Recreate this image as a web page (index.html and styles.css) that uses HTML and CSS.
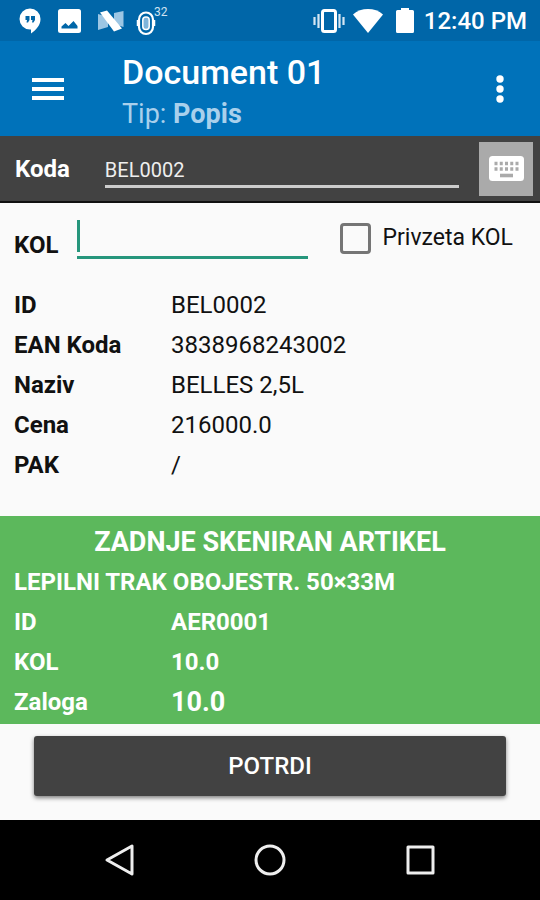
FILE: index.html
```
<!DOCTYPE html>
<html lang="sl">
<head>
  <meta charset="UTF-8">
  <meta name="viewport" content="width=device-width, initial-scale=1.0">
  <title>Document 01</title>
  <link rel="stylesheet" href="styles.css">
</head>
<body>

  <div class="status-bar">
    <div class="status-icons">
      <!-- Hangouts -->
      <svg width="22" height="26" viewBox="0 0 22 26" fill="#fff">
        <path d="M11 .5a10.500 10.500 0 0 1 10.500 10.500c0 6-4 10.500-9.500 14.500v-4h-1A10.500 10.500 0 0 1 11 .5z"/>
        <path fill="#0066a8" d="M6.500 8h4v4L9 14.500H7.500L8 12H6.500zM12 8h4v4l-1.500 2.500H13l.5-2.500H12z"/>
      </svg>
      <!-- Picture -->
      <svg width="23" height="24" viewBox="0 0 23 24">
        <rect width="23" height="24" rx="2.500" fill="#fff"/>
        <path fill="#0066a8" d="M3.500 19.500v-2L7.500 14l3 3 5-5 4 5v2.500z"/>
      </svg>
      <!-- Android N -->
      <svg width="26" height="22" viewBox="0 0 26 22">
        <path fill="#9cc6e4" d="M0 4l10 3v10L0 20zM16 3l9.500-2v16L16 14z"/>
        <path fill="#fff" d="M2 2.500L9 .5 24 18.500 16 21.500z"/>
      </svg>
      <!-- Scanner -->
      <svg class="scanner-icon" width="20" height="26" viewBox="0 0 20 26" fill="none" stroke="#fff">
        <rect x="6.800" y="7" width="6.400" height="12.500" rx="3" stroke-width="1.500" fill="#7fb4da"/>
        <rect x="3" y="2.500" width="14" height="21.500" rx="7" stroke-width="2.200"/>
        <path stroke-width="2.500" d="M2 10v6M18 10v6"/>
      </svg>
      <span class="scan-count">32</span>
    </div>
    <div class="status-right">
      <svg class="vibrate-icon" width="32" height="24" viewBox="0 0 32 24" fill="none" stroke="#fff">
        <rect x="9.500" y="1.500" width="13" height="21" rx="2" stroke-width="3"/>
        <path stroke-width="2.200" stroke="#d5e6f3" d="M1.500 8v8M5.500 5v14M26.500 5v14M30.500 8v8"/>
      </svg>
      <svg class="wifi-icon" width="30" height="24" viewBox="0 0 30 24" fill="#fff">
        <path d="M0 5.500C8-1.800 22-1.800 30 5.500L15 24z"/>
      </svg>
      <svg class="battery-icon" width="18" height="25" viewBox="0 0 18 25" fill="#fff">
        <path d="M5 2V0h8v2h3.500A1.500 1.500 0 0 1 18 3.500v20a1.500 1.500 0 0 1-1.500 1.500h-15A1.500 1.500 0 0 1 0 23.500v-20A1.500 1.500 0 0 1 1.500 2z"/>
      </svg>
      <span class="clock">12:40 PM</span>
    </div>
  </div>

  <header class="app-bar">
    <button class="icon-button" type="button" aria-label="Meni">
      <svg width="32" height="22" viewBox="0 0 32 22" stroke="#fff" stroke-width="4">
        <path d="M0 2h32M0 11h32M0 20h32"/>
      </svg>
    </button>
    <div class="titles">
      <h1>Document 01</h1>
      <p class="subtitle">Tip: <b>Popis</b></p>
    </div>
    <button class="icon-button" type="button" aria-label="Več">
      <svg width="8" height="28" viewBox="0 0 8 28" fill="#fff">
        <circle cx="4" cy="4" r="3.700"/>
        <circle cx="4" cy="14" r="3.700"/>
        <circle cx="4" cy="24" r="3.700"/>
      </svg>
    </button>
  </header>

  <div class="code-bar">
    <label for="koda">Koda</label>
    <input id="koda" class="code-input" type="text" value="BEL0002">
    <button class="keyboard-button" type="button" aria-label="Tipkovnica">
      <svg width="35" height="25" viewBox="0 0 35 25">
        <rect width="35" height="25" rx="3.500" fill="#fff"/>
        <path stroke="#aaa" stroke-width="3.400" stroke-dasharray="3 2.250" d="M5.500 7.500h24.500M5.500 13h24.500"/>
        <path stroke="#aaa" stroke-width="3.600" d="M11 19.500h13"/>
      </svg>
    </button>
  </div>

  <main>
    <div class="quantity-row">
      <label class="quantity-label" for="kol">KOL</label>
      <div class="quantity-field">
        <input id="kol" class="quantity-input" type="text">
      </div>
      <label class="default-check">
        <input type="checkbox">
        <span>Privzeta KOL</span>
      </label>
    </div>

    <dl class="details">
      <dt>ID</dt><dd>BEL0002</dd>
      <dt>EAN Koda</dt><dd>3838968243002</dd>
      <dt>Naziv</dt><dd>BELLES 2,5L</dd>
      <dt>Cena</dt><dd>216000.0</dd>
      <dt>PAK</dt><dd>/</dd>
    </dl>

    <section class="last-scan">
      <h2>ZADNJE SKENIRAN ARTIKEL</h2>
      <p class="article-name">LEPILNI TRAK OBOJESTR. 50×33M</p>
      <dl class="details">
        <dt>ID</dt><dd>AER0001</dd>
        <dt>KOL</dt><dd>10.0</dd>
        <dt>Zaloga</dt><dd class="stock">10.0</dd>
      </dl>
    </section>

    <div class="actions">
      <button class="confirm-button" type="button">POTRDI</button>
    </div>
  </main>

  <nav class="nav-bar">
    <button class="icon-button" type="button" aria-label="Nazaj">
      <svg width="32" height="34" viewBox="0 0 32 34" fill="none" stroke="#eee" stroke-width="3" stroke-linejoin="round">
        <path d="M29 3v28L4 17z"/>
      </svg>
    </button>
    <button class="icon-button" type="button" aria-label="Domov">
      <svg width="34" height="34" viewBox="0 0 34 34" fill="none" stroke="#eee" stroke-width="3">
        <circle cx="17" cy="17" r="14"/>
      </svg>
    </button>
    <button class="icon-button" type="button" aria-label="Nedavno">
      <svg width="32" height="34" viewBox="0 0 32 34" fill="none" stroke="#eee" stroke-width="3" stroke-linejoin="round">
        <rect x="3" y="4" width="25" height="26"/>
      </svg>
    </button>
  </nav>

</body>
</html>
```
FILE: styles.css
```
* {
  box-sizing: border-box;
  margin: 0;
  padding: 0;
}
body {
  font-family: Roboto, "Liberation Sans", sans-serif;
  font-size: 24px;
  line-height: 40px;
  color: #111;
  background-color: #fafafa;
  display: flex;
  flex-direction: column;
  min-height: 100vh;
}
button,
input {
  font: inherit;
  border: none;
  background: none;
}
button {
  cursor: pointer;
}
svg {
  display: block;
  flex-shrink: 0;
}

/* Status bar */
.status-bar {
  display: flex;
  justify-content: space-between;
  height: 41px;
  padding: 0 13px 0 19px;
  background-color: #0066a8;
  color: #fff;
}
.status-icons,
.status-right {
  display: flex;
  align-items: center;
}
.status-icons {
  gap: 17px;
}
.scanner-icon {
  margin: 4px 0 0 -5px;
}
.scan-count {
  align-self: flex-start;
  margin-left: -19px;
  font-size: 12px;
  line-height: 24px;
  color: #cfe3f2;
}
.wifi-icon {
  margin-left: 8px;
}
.battery-icon {
  margin-left: 13px;
}
.clock {
  margin-left: 10px;
  font-weight: 500;
}

/* App bar */
.app-bar {
  display: flex;
  align-items: center;
  height: 95px;
  padding: 0 36px 0 32px;
  background-color: #0072ba;
  color: #fff;
}
.icon-button {
  display: flex;
  align-items: center;
}
.titles {
  flex: 1;
  margin-left: 58px;
  padding-top: 6px;
}
h1 {
  font-size: 34px;
  font-weight: 500;
  line-height: 44px;
}
.subtitle {
  font-size: 27px;
  color: #a9d0ec;
}

/* Code entry */
.code-bar {
  display: flex;
  align-items: center;
  height: 67px;
  padding: 0 7px 0 15px;
  background-color: #424242;
  border-bottom: 2px solid #111;
  color: #fff;
  font-weight: bold;
}
.code-input {
  flex: 1;
  min-width: 0;
  height: 38px;
  margin: 0 20px 0 35px;
  padding-top: 6px;
  border-bottom: 3px solid #ccc;
  color: #eee;
  font-size: 20px;
  font-weight: normal;
}
.keyboard-button {
  display: flex;
  align-items: center;
  justify-content: center;
  width: 54px;
  height: 54px;
  background-color: #aaa;
}

main {
  flex: 1;
}
.quantity-row {
  display: flex;
  align-items: flex-start;
  padding: 15px 27px 20px 14px;
}
.quantity-label {
  margin-top: 7px;
  font-weight: bold;
}
.quantity-field {
  position: relative;
  flex: 1;
  min-width: 0;
  margin: 0 32px 0 19px;
}
/* Text cursor */
.quantity-field::before {
  content: "";
  position: absolute;
  top: 2px;
  left: 0;
  width: 3px;
  height: 32px;
  background-color: #26967c;
}
.quantity-input {
  display: block;
  width: 100%;
  height: 41px;
  padding-left: 4px;
  border-bottom: 3px solid #26967c;
}
.default-check {
  display: flex;
  align-items: center;
  gap: 12px;
  font-size: 23px;
}
.default-check input {
  appearance: none;
  width: 31px;
  height: 31px;
  border: 3px solid #757575;
  border-radius: 4px;
}

/* Article data */
.details {
  display: grid;
  grid-template-columns: 157px 1fr;
  padding: 0 14px;
}
.details dt {
  font-weight: bold;
}

.last-scan {
  margin-top: 31px;
  padding: 6px 0 2px;
  background-color: #5cb85c;
  color: #fff;
  font-weight: bold;
}
.last-scan h2 {
  font-size: 27px;
  text-align: center;
}
.article-name {
  padding: 0 14px;
}
.last-scan .stock {
  font-size: 27px;
}

.actions {
  padding: 12px 34px 24px;
}
.confirm-button {
  display: block;
  width: 100%;
  height: 60px;
  border-radius: 3px;
  background-color: #424242;
  box-shadow: 0 2px 4px rgba(0, 0, 0, 0.5);
  color: #fff;
  font-weight: 500;
}

/* Navigation bar */
.nav-bar {
  display: flex;
  align-items: center;
  justify-content: center;
  gap: 118px;
  height: 80px;
  background-color: #000;
}
```
